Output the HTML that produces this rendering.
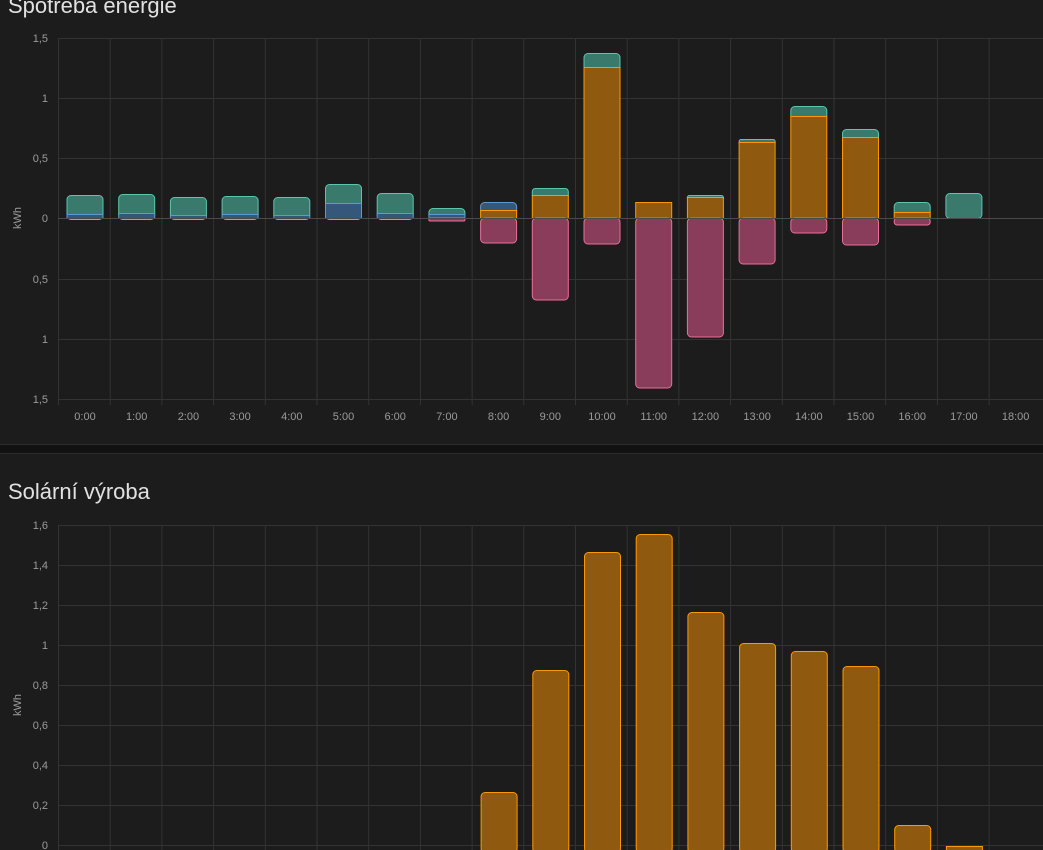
<!DOCTYPE html>
<html><head><meta charset="utf-8"><style>
html,body{margin:0;padding:0;background:#111;}
body{width:1043px;height:849px;overflow:hidden;position:relative;font-family:"Liberation Sans",sans-serif;}
.card{position:absolute;left:0;width:1043px;background:#1c1c1c;}
.t{position:absolute;left:8px;color:#e1e1e1;font-size:22px;}
svg text{font-family:"Liberation Sans",sans-serif;fill:#9b9b9b;font-size:11px;}
</style></head><body>
<div class="card" style="top:0;height:444px;border-bottom:1px solid #2c2c2c;">
<div class="t" style="top:-7px;">Spotřeba energie</div>
<svg width="1043" height="444" style="position:absolute;left:0;top:0">
<g stroke="#333" stroke-width="1">
<line x1="58" y1="38.5" x2="1043" y2="38.5"/><line x1="58" y1="98.5" x2="1043" y2="98.5"/><line x1="58" y1="158.5" x2="1043" y2="158.5"/><line x1="58" y1="279.5" x2="1043" y2="279.5"/><line x1="58" y1="339.5" x2="1043" y2="339.5"/><line x1="58" y1="399.5" x2="1043" y2="399.5"/>
<line x1="58.5" y1="38" x2="58.5" y2="405"/><line x1="110.2" y1="38" x2="110.2" y2="405"/><line x1="161.9" y1="38" x2="161.9" y2="405"/><line x1="213.6" y1="38" x2="213.6" y2="405"/><line x1="265.3" y1="38" x2="265.3" y2="405"/><line x1="317" y1="38" x2="317" y2="405"/><line x1="368.7" y1="38" x2="368.7" y2="405"/><line x1="420.4" y1="38" x2="420.4" y2="405"/><line x1="472.1" y1="38" x2="472.1" y2="405"/><line x1="523.8" y1="38" x2="523.8" y2="405"/><line x1="575.5" y1="38" x2="575.5" y2="405"/><line x1="627.2" y1="38" x2="627.2" y2="405"/><line x1="678.9" y1="38" x2="678.9" y2="405"/><line x1="730.6" y1="38" x2="730.6" y2="405"/><line x1="782.3" y1="38" x2="782.3" y2="405"/><line x1="834" y1="38" x2="834" y2="405"/><line x1="885.7" y1="38" x2="885.7" y2="405"/><line x1="937.4" y1="38" x2="937.4" y2="405"/><line x1="989.1" y1="38" x2="989.1" y2="405"/>
</g>
<g text-anchor="end"><text x="48" y="42">1,5</text><text x="48" y="102">1</text><text x="48" y="162">0,5</text><text x="48" y="222">0</text><text x="48" y="283">0,5</text><text x="48" y="343">1</text><text x="48" y="403">1,5</text></g>
<text x="21" y="218" transform="rotate(-90 21 218)" text-anchor="middle" font-size="10">kWh</text>
<g text-anchor="middle"><text x="85" y="420">0:00</text><text x="136.7" y="420">1:00</text><text x="188.4" y="420">2:00</text><text x="240.1" y="420">3:00</text><text x="291.8" y="420">4:00</text><text x="343.5" y="420">5:00</text><text x="395.2" y="420">6:00</text><text x="446.9" y="420">7:00</text><text x="498.6" y="420">8:00</text><text x="550.3" y="420">9:00</text><text x="602" y="420">10:00</text><text x="653.7" y="420">11:00</text><text x="705.4" y="420">12:00</text><text x="757.1" y="420">13:00</text><text x="808.8" y="420">14:00</text><text x="860.5" y="420">15:00</text><text x="912.2" y="420">16:00</text><text x="963.9" y="420">17:00</text><text x="1015.6" y="420">18:00</text></g>
<!-- teal -->
<g fill="#3a7a6c" stroke="#5cc5ad" stroke-width="1">
<rect x="67" y="195.5" width="36" height="24" rx="4"/><rect x="118.7" y="194.5" width="36" height="25" rx="4"/><rect x="170.4" y="197.5" width="36" height="22" rx="4"/><rect x="222.1" y="196.5" width="36" height="23" rx="4"/><rect x="273.8" y="197.5" width="36" height="22" rx="4"/><rect x="325.5" y="184.5" width="36" height="35" rx="4"/><rect x="377.2" y="193.5" width="36" height="26" rx="4"/><rect x="428.9" y="208.5" width="36" height="11" rx="4"/><rect x="532.3" y="188.5" width="36" height="10" rx="3"/><rect x="584" y="53.5" width="36" height="18" rx="4"/><rect x="687.4" y="195.5" width="36" height="5" rx="2"/><rect x="739.1" y="139.5" width="36" height="6" rx="2"/><rect x="790.8" y="106.5" width="36" height="13" rx="4"/><rect x="842.5" y="129.5" width="36" height="11" rx="4"/><rect x="894.2" y="202.5" width="36" height="13" rx="4"/><rect x="945.9" y="193.5" width="36" height="25" rx="4"/>
</g>
<!-- blue -->
<g fill="#35587a" stroke="#5b9bd5" stroke-width="1">
<rect x="67" y="214.5" width="36" height="4"/><rect x="118.7" y="213.5" width="36" height="5"/><rect x="170.4" y="215.5" width="36" height="3"/><rect x="222.1" y="214.5" width="36" height="4"/><rect x="273.8" y="215.5" width="36" height="3"/><rect x="325.5" y="203.5" width="36" height="15"/><rect x="377.2" y="213.5" width="36" height="5"/><rect x="428.9" y="214.5" width="36" height="4"/><rect x="480.6" y="202.5" width="36" height="12" rx="4"/>
</g>
<!-- orange -->
<g fill="#8f5a10" stroke="#ff9800" stroke-width="1">
<rect x="480.6" y="210.5" width="36" height="8"/><rect x="532.3" y="195.5" width="36" height="23"/><rect x="584" y="67.5" width="36" height="151"/><rect x="635.7" y="202.5" width="36" height="16"/><rect x="687.4" y="197.5" width="36" height="21"/><rect x="739.1" y="142.5" width="36" height="76"/><rect x="790.8" y="116.5" width="36" height="102"/><rect x="842.5" y="137.5" width="36" height="81"/><rect x="894.2" y="212.5" width="36" height="6"/>
</g>
<!-- pink -->
<g fill="#8a3d5a" stroke="#e86f9a" stroke-width="1">
<rect x="428.9" y="218" width="36" height="3" rx="1"/><rect x="480.6" y="218" width="36" height="25" rx="4"/><rect x="532.3" y="218" width="36" height="82" rx="4"/><rect x="584" y="218" width="36" height="26" rx="4"/><rect x="635.7" y="218" width="36" height="170" rx="4"/><rect x="687.4" y="218" width="36" height="119" rx="4"/><rect x="739.1" y="218" width="36" height="46" rx="4"/><rect x="790.8" y="218" width="36" height="15" rx="4"/><rect x="842.5" y="218" width="36" height="27" rx="4"/><rect x="894.2" y="218" width="36" height="7" rx="3"/>
</g>
<line x1="58" y1="218.5" x2="1043" y2="218.5" stroke="#4a4a4a"/>
</svg>
</div>
<div class="card" style="top:453px;height:396px;border-top:1px solid #2c2c2c;">
<div class="t" style="top:25px;">Solární výroba</div>
<svg width="1043" height="396" style="position:absolute;left:0;top:0" viewBox="0 453 1043 396">
<g stroke="#333" stroke-width="1">
<line x1="58" y1="524.5" x2="1043" y2="524.5"/><line x1="58" y1="564.5" x2="1043" y2="564.5"/><line x1="58" y1="604.5" x2="1043" y2="604.5"/><line x1="58" y1="644.5" x2="1043" y2="644.5"/><line x1="58" y1="684.5" x2="1043" y2="684.5"/><line x1="58" y1="724.5" x2="1043" y2="724.5"/><line x1="58" y1="764.5" x2="1043" y2="764.5"/><line x1="58" y1="804.5" x2="1043" y2="804.5"/><line x1="58" y1="844.5" x2="1043" y2="844.5"/>
<line x1="58.5" y1="524" x2="58.5" y2="849"/><line x1="110.2" y1="524" x2="110.2" y2="849"/><line x1="161.9" y1="524" x2="161.9" y2="849"/><line x1="213.6" y1="524" x2="213.6" y2="849"/><line x1="265.3" y1="524" x2="265.3" y2="849"/><line x1="317" y1="524" x2="317" y2="849"/><line x1="368.7" y1="524" x2="368.7" y2="849"/><line x1="420.4" y1="524" x2="420.4" y2="849"/><line x1="472.1" y1="524" x2="472.1" y2="849"/><line x1="523.8" y1="524" x2="523.8" y2="849"/><line x1="575.5" y1="524" x2="575.5" y2="849"/><line x1="627.2" y1="524" x2="627.2" y2="849"/><line x1="678.9" y1="524" x2="678.9" y2="849"/><line x1="730.6" y1="524" x2="730.6" y2="849"/><line x1="782.3" y1="524" x2="782.3" y2="849"/><line x1="834" y1="524" x2="834" y2="849"/><line x1="885.7" y1="524" x2="885.7" y2="849"/><line x1="937.4" y1="524" x2="937.4" y2="849"/><line x1="989.1" y1="524" x2="989.1" y2="849"/>
</g>
<g text-anchor="end"><text x="48" y="528">1,6</text><text x="48" y="568">1,4</text><text x="48" y="608">1,2</text><text x="48" y="648">1</text><text x="48" y="688">0,8</text><text x="48" y="728">0,6</text><text x="48" y="768">0,4</text><text x="48" y="808">0,2</text><text x="48" y="848">0</text></g>
<text x="21" y="704" transform="rotate(-90 21 704)" text-anchor="middle" font-size="10">kWh</text>
<g fill="#8f5a10" stroke="#ff9800" stroke-width="1">
<rect x="481.1" y="791.5" width="36" height="60" rx="4"/><rect x="532.8" y="669.5" width="36" height="182" rx="4"/><rect x="584.5" y="551.5" width="36" height="300" rx="4"/><rect x="636.2" y="533.5" width="36" height="318" rx="4"/><rect x="687.9" y="611.5" width="36" height="240" rx="4"/><rect x="739.6" y="642.5" width="36" height="209" rx="4"/><rect x="791.3" y="650.5" width="36" height="201" rx="4"/><rect x="843" y="665.5" width="36" height="186" rx="4"/><rect x="894.7" y="824.5" width="36" height="27" rx="4"/><rect x="946.4" y="845.5" width="36" height="8"/>
</g>
</svg>
</div>
</body></html>
